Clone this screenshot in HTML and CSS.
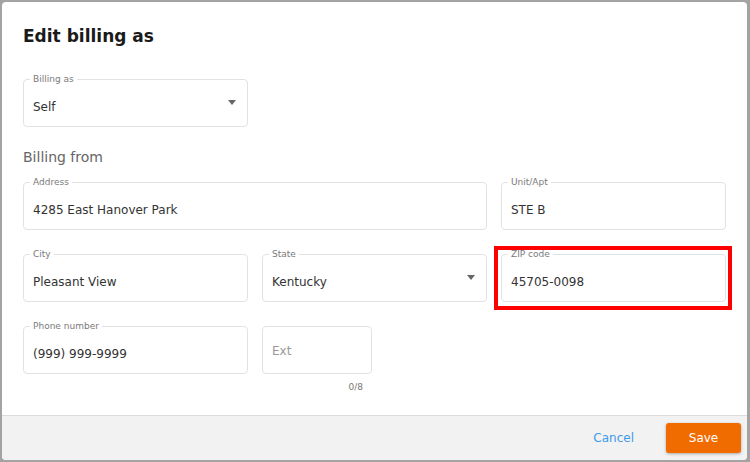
FILE: index.html
```html
<!DOCTYPE html>
<html lang="en">
<head>
    <meta charset="UTF-8">
    <meta name="viewport" content="width=device-width, initial-scale=1.0">
    <title>Edit billing as</title>
    <link rel="stylesheet" href="styles.css">
</head>
<body>
    <div class="dialog">
        <div class="dialog-body">
            <h2 class="dialog-title">Edit billing as</h2>

            <div class="field field-select billing-as">
                <span class="field-label">Billing as</span>
                <div class="field-value">Self</div>
                <span class="arrow"></span>
            </div>

            <div class="section-label">Billing from</div>

            <div class="form-grid">
                <div class="field span-2">
                    <span class="field-label">Address</span>
                    <div class="field-value">4285 East Hanover Park</div>
                </div>
                <div class="field">
                    <span class="field-label">Unit/Apt</span>
                    <div class="field-value">STE B</div>
                </div>

                <div class="field">
                    <span class="field-label">City</span>
                    <div class="field-value">Pleasant View</div>
                </div>
                <div class="field field-select">
                    <span class="field-label">State</span>
                    <div class="field-value">Kentucky</div>
                    <span class="arrow"></span>
                </div>
                <div class="field highlighted">
                    <span class="field-label">ZIP code</span>
                    <div class="field-value">45705-0098</div>
                </div>

                <div class="field">
                    <span class="field-label">Phone number</span>
                    <div class="field-value">(999) 999-9999</div>
                </div>
                <div class="ext-wrap">
                    <div class="field ext">
                        <div class="field-value placeholder">Ext</div>
                    </div>
                    <div class="counter">0/8</div>
                </div>
            </div>
        </div>

        <div class="dialog-footer">
            <button class="btn-link">Cancel</button>
            <button class="btn-primary">Save</button>
        </div>
    </div>
</body>
</html>
```

FILE: styles.css
```css
html, body {
    margin: 0;
    height: 100%;
}

body {
    font-family: 'DejaVu Sans', Verdana, sans-serif;
    background-color: #a3a3a3; /* fondo del modal */
    padding: 2px 3px 2px 2px;
    box-sizing: border-box;
}

.dialog {
    background: #fff;
    height: 458px;
    border-radius: 4px;
    display: flex;
    flex-direction: column;
    overflow: hidden;
}

.dialog-body {
    flex: 1;
    padding: 22px 21px 0 21px;
}

.dialog-title {
    margin: 0;
    font-size: 17px;
    line-height: 24px;
    font-weight: 700;
    color: #1a1a1a;
}

.field {
    position: relative;
    height: 48px;
    box-sizing: border-box;
    border: 1px solid #e2e2e2;
    border-radius: 4px;
}

.field-label {
    position: absolute;
    top: -6px;
    left: 6px;
    padding: 0 3px;
    background: #fff;
    font-size: 9px;
    line-height: 11px;
    color: #7a7a7a;
}

.field-value {
    padding: 17px 9px 0 9px;
    font-size: 12px;
    line-height: 20px;
    color: #333;
}

.field-value.placeholder {
    padding-top: 14px;
    color: #999;
}

.arrow {
    position: absolute;
    top: 20px;
    right: 11px;
    width: 0;
    height: 0;
    border-left: 4px solid transparent;
    border-right: 4px solid transparent;
    border-top: 5px solid #666;
}

.billing-as {
    width: 225px;
    margin-top: 31px;
}

.section-label {
    margin-top: 20px;
    font-size: 14px;
    line-height: 20px;
    color: #666;
}

.form-grid {
    margin-top: 15px;
    display: grid;
    grid-template-columns: repeat(3, 225px);
    column-gap: 14px;
    row-gap: 24px;
}

.span-2 {
    grid-column: span 2;
}

/* marca roja alrededor del campo */
.highlighted::after {
    content: "";
    position: absolute;
    top: -9px;
    left: -8px;
    right: -7px;
    bottom: -9px;
    border: 4px solid #f00;
}

.ext {
    width: 110px;
}

.counter {
    width: 110px;
    box-sizing: border-box;
    padding: 7px 9px 0 0;
    text-align: right;
    font-size: 9px;
    line-height: 12px;
    color: #777;
}

.dialog-footer {
    height: 45px;
    box-sizing: border-box;
    border-top: 1px solid #dcdcdc;
    background: #f2f2f2;
    display: flex;
    justify-content: flex-end;
    align-items: center;
    gap: 32px;
    padding-right: 6px;
}

.btn-link {
    background: none;
    border: none;
    padding: 0;
    font-family: inherit;
    font-size: 12px;
    color: #3d9be9;
    cursor: pointer;
}

.btn-primary {
    width: 75px;
    height: 30px;
    background-color: #f06c00;
    color: #fff;
    border: none;
    border-radius: 3px;
    font-family: inherit;
    font-size: 12px;
    box-shadow: 0 1px 3px rgba(0, 0, 0, 0.3);
    cursor: pointer;
}
```
